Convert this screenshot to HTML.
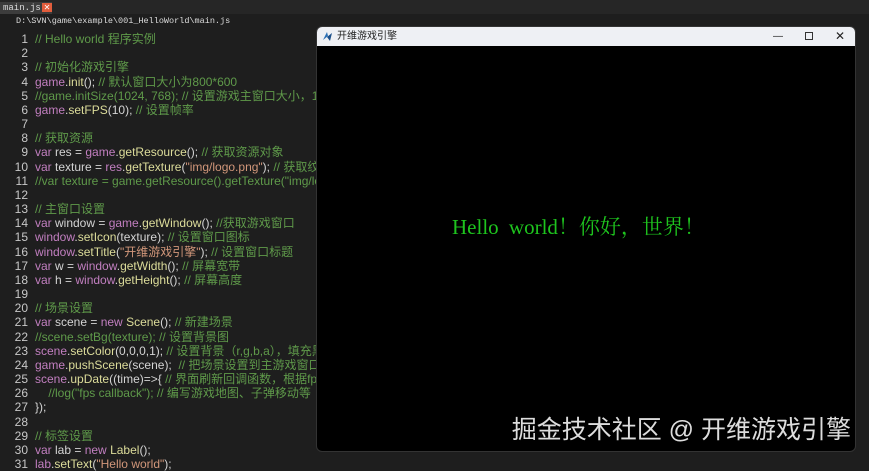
<!DOCTYPE html>
<html><head><meta charset="utf-8"><style>
*{margin:0;padding:0;box-sizing:border-box}
body{width:869px;height:461px;background:#1e1e1e;overflow:hidden;position:relative;font-family:"Liberation Sans","Noto Sans CJK SC",sans-serif}
.tabbar{position:absolute;left:0;top:0;width:869px;height:14px;background:#262626}
.tab{position:absolute;left:0;top:2px;height:12px;width:52px;background:#3c3c3c;color:#ddd;font:9px "Liberation Mono",monospace;padding-left:3px;line-height:12px}
.x{position:absolute;left:42px;top:3px;width:10px;height:9px;background:#e25d3c;color:#fff;font-size:8px;line-height:9px;text-align:center}
.path{position:absolute;left:16px;top:16px;color:#ddd;font:8.5px "Liberation Mono",monospace}
.code{position:absolute;left:0;top:32px;font-size:12px;line-height:14.17px;white-space:pre;color:#d4d4d4}
.ln{display:inline-block;width:28px;text-align:right;color:#c8c8c8;margin-right:7px}
.c{color:#5f9a4a}.k{color:#c27fc0}.m{color:#dcdc9a}.s{color:#d2977a}
.win{position:absolute;left:316px;top:26px;width:540px;height:426px;background:#000;border-radius:6px;overflow:hidden;border:1px solid #333}
.tb{height:19px;background:#eef0f4;position:relative;font-size:10px;color:#222;line-height:19px;padding-left:20px}
.hello{position:absolute;left:135px;top:184px;color:#1ec41e;font:21px "Liberation Serif","Noto Serif CJK SC",serif;white-space:pre;word-spacing:5px}
.wm{position:absolute;right:4px;bottom:5px;color:#ddd;font-size:25px;font-family:"Liberation Sans","Noto Sans CJK SC",sans-serif;white-space:pre}
</style></head><body>
<div class="tabbar"><div class="tab">main.js</div><div class="x">✕</div></div>
<div class="path">D:\SVN\game\example\001_HelloWorld\main.js</div>
<div class="code"><span class="ln">1</span><span class="c">// Hello world 程序实例</span>
<span class="ln">2</span>
<span class="ln">3</span><span class="c">// 初始化游戏引擎</span>
<span class="ln">4</span><span class="k">game</span>.<span class="m">init</span>(); <span class="c">// 默认窗口大小为800*600</span>
<span class="ln">5</span><span class="c">//game.initSize(1024, 768); // 设置游戏主窗口大小，1024</span>
<span class="ln">6</span><span class="k">game</span>.<span class="m">setFPS</span>(10); <span class="c">// 设置帧率</span>
<span class="ln">7</span>
<span class="ln">8</span><span class="c">// 获取资源</span>
<span class="ln">9</span><span class="k">var</span> res = <span class="k">game</span>.<span class="m">getResource</span>(); <span class="c">// 获取资源对象</span>
<span class="ln">10</span><span class="k">var</span> texture = <span class="k">res</span>.<span class="m">getTexture</span>(<span class="s">"img/logo.png"</span>); <span class="c">// 获取纹</span>
<span class="ln">11</span><span class="c">//var texture = game.getResource().getTexture("img/lo</span>
<span class="ln">12</span>
<span class="ln">13</span><span class="c">// 主窗口设置</span>
<span class="ln">14</span><span class="k">var</span> window = <span class="k">game</span>.<span class="m">getWindow</span>(); <span class="c">//获取游戏窗口</span>
<span class="ln">15</span><span class="k">window</span>.<span class="m">setIcon</span>(texture); <span class="c">// 设置窗口图标</span>
<span class="ln">16</span><span class="k">window</span>.<span class="m">setTitle</span>(<span class="s">"开维游戏引擎"</span>); <span class="c">// 设置窗口标题</span>
<span class="ln">17</span><span class="k">var</span> w = <span class="k">window</span>.<span class="m">getWidth</span>(); <span class="c">// 屏幕宽带</span>
<span class="ln">18</span><span class="k">var</span> h = <span class="k">window</span>.<span class="m">getHeight</span>(); <span class="c">// 屏幕高度</span>
<span class="ln">19</span>
<span class="ln">20</span><span class="c">// 场景设置</span>
<span class="ln">21</span><span class="k">var</span> scene = <span class="k">new</span> <span class="m">Scene</span>(); <span class="c">// 新建场景</span>
<span class="ln">22</span><span class="c">//scene.setBg(texture); // 设置背景图</span>
<span class="ln">23</span><span class="k">scene</span>.<span class="m">setColor</span>(0,0,0,1); <span class="c">// 设置背景（r,g,b,a），填充黑色</span>
<span class="ln">24</span><span class="k">game</span>.<span class="m">pushScene</span>(scene);  <span class="c">// 把场景设置到主游戏窗口</span>
<span class="ln">25</span><span class="k">scene</span>.<span class="m">upDate</span>((time)=&gt;{ <span class="c">// 界面刷新回调函数，根据fps帧</span>
<span class="ln">26</span>    <span class="c">//log("fps callback"); // 编写游戏地图、子弹移动等</span>
<span class="ln">27</span>});
<span class="ln">28</span>
<span class="ln">29</span><span class="c">// 标签设置</span>
<span class="ln">30</span><span class="k">var</span> lab = <span class="k">new</span> <span class="m">Label</span>();
<span class="ln">31</span><span class="k">lab</span>.<span class="m">setText</span>(<span class="s">"Hello world"</span>);</div>
<div class="win">
 <div class="tb"><svg style="position:absolute;left:5px;top:4px" width="11" height="11" viewBox="0 0 11 11"><path d="M1 9L5 1L6 5Z" fill="#2a6fb5"/><path d="M5 6L10 2L8 10Z" fill="#1b4f8a"/></svg>开维游戏引擎
  <span style="position:absolute;left:456px;top:0">—</span>
  <span style="position:absolute;left:488px;top:5px;width:8px;height:8px;border:1px solid #333"></span>
  <span style="position:absolute;left:518px;top:0;font-size:12px">✕</span>
 </div>
 <div class="hello">Hello world！你好，世界！</div>
 <div class="wm">掘金技术社区 @ 开维游戏引擎</div>
</div>
</body></html>
